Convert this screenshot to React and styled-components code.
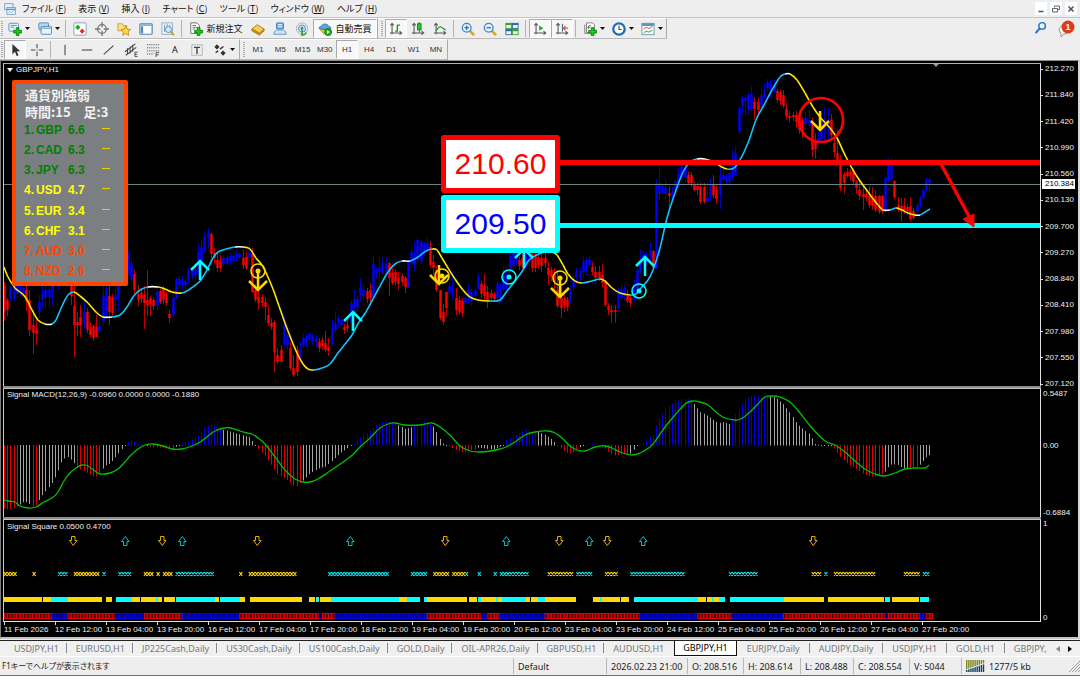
import React from 'react';
import styled, { createGlobalStyle, css } from 'styled-components';

const UI_FONT = '"Noto Sans", "Noto Sans CJK JP", sans-serif';
const CHART_FONT = '"Liberation Sans", sans-serif';

const GlobalStyle = createGlobalStyle`
  * {
    box-sizing: border-box;
  }

  body {
    margin: 0;
    background: #fff;
    font-family: ${UI_FONT};
    font-size: 9px;
    color: #111;
  }

  button {
    font: inherit;
    color: inherit;
    background: none;
    border: 0;
    padding: 0;
    margin: 0;
  }
`;

/* ---------- Window chrome ---------- */

const AppWindow = styled.div`
  display: flex;
  flex-direction: column;
  background: #eeeeee;
  border-bottom: 1px solid #4d7396;
  overflow: hidden;
`;

const MenuBar = styled.nav`
  display: flex;
  align-items: center;
  gap: 12px;
  height: 18px;
  padding: 0 3px 0 4px;
  border-bottom: 1px solid #c4c4c4;
`;

const MenuItem = styled.button`
  font-family: "Noto Sans CJK JP", sans-serif;
  font-feature-settings: "palt";
  font-size: 9px;
  line-height: 16px;
  white-space: nowrap;

  &:first-of-type {
    margin-left: -6px;
  }
`;

const WindowButtons = styled.div`
  display: flex;
  gap: 3px;
  margin-left: auto;

  button {
    width: 12px;
    height: 13px;
    background: #fff;
    display: flex;
    align-items: center;
    justify-content: center;
  }
`;

const ToolRow = styled.div`
  display: flex;
  align-items: stretch;
  height: 21px;
`;

const Strip = styled.div`
  display: flex;
  align-items: stretch;
  padding-left: 4px;
  border-top: 1px solid #fff;
  border-right: 1px solid #aaa;
  border-bottom: 1px solid #bbb;
  background: #eeeeee;
  position: relative;

  &::before {
    content: '';
    position: absolute;
    left: 1px;
    top: 2px;
    bottom: 2px;
    width: 2px;
    background: repeating-linear-gradient(#aaa 0 1px, #eee 1px 2px);
  }

  & + & {
    padding-left: 7px;
  }

  & + &::before {
    left: 3px;
  }
`;

const ToolButton = styled.button`
  display: flex;
  align-items: center;
  justify-content: center;
  gap: 3px;
  width: ${(p) => (p.$wide ? p.$wide : 22)}px;
  white-space: nowrap;
  border: 1px solid transparent;
  ${(p) =>
    p.$pressed &&
    css`
      background: #f8f8f8;
      border-color: #aaa #fff #fff #aaa;
    `}
`;

const OrderLabel = styled.span`
  font-family: "Noto Sans CJK JP", sans-serif;
  font-size: 9px;
  line-height: 16px;
`;

const Divider = styled.span`
  width: 1px;
  margin: 1px 3px 1px 2px;
  background: #b4b4b4;
`;

const Periods = styled.div`
  display: grid;
  grid-template-columns: repeat(9, 1fr);
  width: 200px;
  font-family: "Liberation Sans", sans-serif;
  font-size: 8px;
  color: #333;

  button {
    width: auto;
  }
`;

const TopRight = styled.div`
  display: flex;
  align-items: center;
  gap: 10px;
  margin-left: auto;
  padding-right: 5px;
`;

/* ---------- Chart ---------- */

const ChartWindow = styled.main`
  display: flex;
  flex-direction: column;
  background: #000;
  color: #f0f0f0;
  font-family: ${CHART_FONT};
  font-size: 8px;
  line-height: 10px;
  border-top: 1px solid #8c8c8c;
  border-left: 1px solid #7a7a7a;
  border-right: 2px solid #d8d8d8;
  border-bottom: 2px solid #c4c4c4;
  padding: 2px 0 0 2px;
`;

const Pane = styled.section`
  display: flex;
  height: ${(p) => p.$height}px;
`;

const Plot = styled.div`
  position: relative;
  flex: 1;
  min-width: 0;
  overflow: hidden;
  border-left: 1px solid #c8c8c8;
  border-right: 1px solid #e0e0e0;
  ${(p) => p.$top && 'border-top: 1px solid #b0b0b0;'}
  ${(p) => p.$bottom && 'border-bottom: 1px solid #e0e0e0;'}

  > svg {
    display: block;
    width: 100%;
    height: 100%;
  }
`;

const Splitter = styled.div`
  height: 3px;
  margin-right: 37px;
  background: #8e8e8e;
  border-bottom: 1px solid #c4c4c4;
`;

const Caption = styled.div`
  position: absolute;
  left: 3px;
  top: ${(p) => p.$top}px;
  display: flex;
  align-items: center;
  gap: 3px;
  white-space: nowrap;
`;

const Scale = styled.div`
  position: relative;
  display: flex;
  flex-direction: column;
  justify-content: space-between;
  width: 37px;
  padding-left: 2px;
  line-height: 8px;
`;

const PriceScale = styled(Scale)`
  padding: 2px 0 0;
  margin-bottom: -2px;
`;

// The zero line sits above the middle of this scale
const MacdScale = styled(Scale)`
  display: grid;
  grid-template-rows: 52px 1fr 8px;
  padding-top: 1px;
`;

const ScaleLabel = styled.span`
  display: flex;
  align-items: center;
  gap: 2px;

  &::before {
    content: '';
    width: 2px;
    height: 1px;
    background: #ddd;
  }
`;

const PriceTag = styled.span`
  position: absolute;
  left: 1px;
  top: 116px;
  width: 33px;
  padding-left: 3px;
  background: #fff;
  color: #000;
  line-height: 10px;
`;

const TimeAxis = styled.div`
  display: flex;
  height: 15px;
  overflow: hidden;
  padding-left: 1px;
  white-space: nowrap;

  span {
    flex: 0 0 51px;
    min-width: 0;
    padding-top: 3px;
    position: relative;
  }

  span::before {
    content: '';
    position: absolute;
    left: 0;
    top: 0;
    width: 1px;
    height: 3px;
    background: #ddd;
  }
`;

const StrengthPanel = styled.div`
  position: absolute;
  left: 8px;
  top: 16px;
  width: 116px;
  height: 206px;
  border: 4px solid #ff4500;
  border-radius: 2px;
  background: #7c7f82;
  padding: 2px 14px 0 8px;
  display: flex;
  flex-direction: column;
  font-family: "Noto Sans CJK JP", sans-serif;
  font-size: 13px;
  font-weight: 700;
  line-height: 17px;
  color: #f2f2f2;
`;

const StrengthHead = styled.div`
  display: flex;
  gap: 13px;
  padding-left: 1px;
`;

const StrengthList = styled.ul`
  list-style: none;
  margin: 0;
  padding: 0;
  flex: 1;
  display: grid;
  grid-template-rows: repeat(8, 1fr);
`;

const StrengthRow = styled.li`
  display: grid;
  grid-template-columns: 12px 32px 1fr 8px;
  align-items: center;
  font-family: "Liberation Sans", sans-serif;
  font-size: 12px;
  font-weight: 700;
  color: ${(p) => p.$color};

  i {
    height: 1px;
    margin-bottom: 4px;
    background: #e8d000;
  }
`;

const PriceBox = styled.div`
  position: absolute;
  left: 437px;
  top: ${(p) => p.$top}px;
  width: 119px;
  height: 58px;
  display: flex;
  align-items: center;
  justify-content: center;
  border: 5px solid ${(p) => p.$border};
  border-radius: 3px;
  background: #fff;
  color: ${(p) => p.$color};
  font-family: "Liberation Sans", sans-serif;
  font-size: 30px;
  line-height: 48px;
`;

/* ---------- Tabs and status ---------- */

const TabBar = styled.div`
  display: flex;
  align-items: stretch;
  height: 17px;
  margin-top: 1px;
  padding-left: 5px;
  border-top: 1px solid #222;
  border-bottom: 1px solid #fff;
  background: #f0f0f0;
`;

const TabList = styled.div`
  display: flex;
  flex: 1;
  min-width: 0;
  overflow: hidden;

  [aria-selected='true'] ~ button {
    padding-right: 10px;
  }
`;

const Tab = styled.button`
  position: relative;
  flex: none;
  padding: 0 8px 0 9px;
  color: #777;
  line-height: 14px;
  white-space: nowrap;

  &::after {
    content: '';
    position: absolute;
    right: 0;
    top: 2px;
    height: 10px;
    width: 1px;
    background: ${(p) => (p.$plain ? 'transparent' : '#888')};
  }

  ${(p) =>
    p.$active &&
    css`
      color: #000;
      background: #fff;
      border: 1px solid #111;
      border-top: 0;
      padding: 0 8px;
      margin: 0 1px 0 2px;
    `}
`;

const TabArrows = styled.div`
  display: flex;
  align-items: center;
  gap: 8px;
  padding: 0 8px 0 6px;
`;

const StatusBar = styled.footer`
  display: grid;
  grid-template-columns: 1fr 93px 81px 56px 57px 53px 56px 52px 119px;
  height: 18px;
  color: #222;
  line-height: 15px;
  white-space: nowrap;
`;

const StatusCell = styled.div`
  display: flex;
  align-items: center;
  gap: 4px;
  margin: 1px 0;
  padding-left: 4px;
  border-left: 1px solid #b8b8b8;

  &:last-child > svg:last-child {
    margin-left: auto;
  }
`;

const StatusHelp = styled.div`
  padding: 1px 2px;
  font-family: "Noto Sans", "Noto Sans CJK JP", sans-serif;
  font-feature-settings: "palt";
  font-size: 8px;
`;

/* ---------- Icons ---------- */

const Icon = ({ size = 14, children }) => (
  <svg width={size} height={size} viewBox="0 0 16 16" fill="none" aria-hidden="true">
    {children}
  </svg>
);

const Plus = ({ x = 6, y = 6 }) => (
  <path
    transform={`translate(${x} ${y})`}
    d="M3.500 0.500h3v3h3v3h-3v3h-3v-3h-3v-3h3z"
    fill="#1fc61f"
    stroke="#0b7d0b"
  />
);

const Caret = () => (
  <svg width="5" height="4" viewBox="0 0 5 4" aria-hidden="true">
    <path d="M0 0h5L2.500 3z" fill="#111" />
  </svg>
);

const Axes = () => (
  <path d="M3.500 14V2M1.500 4l2-2.500 2 2.500M1 12.500h12.500M12 10.500l2.500 2-2.500 2" stroke="#555" strokeWidth="1.200" />
);

const icons = {
  logo: (
    <>
      <rect x="1" y="1" width="11" height="8" fill="#e9f4ff" stroke="#4b90cc" />
      <rect x="4" y="6" width="11" height="9" fill="#fff" stroke="#4b90cc" />
      <path d="M4 8.500h11" stroke="#4b90cc" strokeWidth="2" />
      <path d="M6 13l2-2 2 2 3-3" stroke="#4b90cc" />
    </>
  ),
  newChart: (
    <>
      <rect x="1" y="1.500" width="11" height="9" rx="1" fill="#e4f1fb" stroke="#5a8fb8" />
      <path d="M3 4h7M3 6h4" stroke="#5a8fb8" />
      <Plus />
    </>
  ),
  profiles: (
    <>
      <rect x="1" y="1" width="11" height="8" rx="1" fill="#b9d9ef" stroke="#4b84b4" />
      <rect x="3.500" y="5" width="12" height="9" rx="1" fill="#e8f4fc" stroke="#4b84b4" />
      <path d="M4 7h11" stroke="#4b84b4" />
    </>
  ),
  market: (
    <>
      <rect x="1" y="1" width="14" height="14" rx="1" fill="#fff" stroke="#6d9fc6" />
      <path d="M5.500 3l3 3-3 3-3-3z" fill="#18a818" />
      <path d="M10.500 7.500l3 3-3 3-3-3z" fill="#e83020" />
    </>
  ),
  target: (
    <>
      <circle cx="8" cy="8" r="5" stroke="#777" strokeWidth="1.500" />
      <path d="M8 0v6M8 10v6M0 8h6M10 8h6" stroke="#777" strokeWidth="1.500" />
    </>
  ),
  navigator: (
    <>
      <path d="M1 2h5l1 2h4v6H1z" fill="#fbe08a" stroke="#c79a2a" />
      <path d="M10 4.500l1.700 3.600 3.800.5-2.800 2.700.7 3.900L10 13.300l-3.400 1.900.7-3.900-2.800-2.700 3.800-.5z" fill="#ffd84a" stroke="#b98a14" />
    </>
  ),
  terminal: (
    <>
      <rect x="1" y="2" width="14" height="12" rx="1" fill="#fff" stroke="#4f86b4" strokeWidth="1.400" />
      <path d="M1.500 3.500h13" stroke="#7db2dc" strokeWidth="2" />
      <path d="M3.500 5v8" stroke="#4f86b4" strokeWidth="2.400" />
    </>
  ),
  tester: (
    <>
      <rect x="1" y="1" width="12" height="13" fill="#eef5fa" stroke="#8aa9bf" />
      <path d="M4 3v8M7 2v4M10 3v4" stroke="#6d94b0" />
      <circle cx="8.500" cy="8.500" r="3.500" fill="#d3eafb" stroke="#4a86b8" />
      <path d="M11 11l4 4" stroke="#c99a2c" strokeWidth="2" />
    </>
  ),
  order: (
    <>
      <path d="M2 1h7l3 3v9H2z" fill="#fff" stroke="#666" />
      <path d="M4 4h4M4 6h6M4 8h3" stroke="#666" />
      <Plus />
    </>
  ),
  gold: (
    <>
      <path d="M1 8l6-5 8 5-5 5z" fill="#f4cf58" stroke="#a87412" />
      <path d="M1 8v2l8.500 5 5.500-5V8l-5.500 5z" fill="#d9992a" stroke="#a87412" />
    </>
  ),
  mail: (
    <>
      <rect x="4" y="1" width="8" height="7" rx="1" fill="#7ab7ea" stroke="#2d6fae" />
      <path d="M6 3h4M6 5.500h4" stroke="#fff" />
      <path d="M1 14c0-4 3-5 7-5s7 1 7 5z" fill="#cfe4f6" stroke="#5a90c0" />
    </>
  ),
  signals: (
    <>
      <circle cx="8" cy="7.500" r="6.500" fill="#dfe8ee" stroke="#a3b4c0" />
      <circle cx="8" cy="7.500" r="3.800" stroke="#6b98b8" strokeWidth="1.300" />
      <circle cx="8" cy="7" r="1.600" fill="#3b8bc2" />
      <path d="M8 8v7c2 0 4-1 5-3" stroke="#2ca02c" strokeWidth="1.800" />
    </>
  ),
  auto: (
    <>
      <path d="M2 8l4 5 7-1 1-4z" fill="#f2c84b" stroke="#b3841a" />
      <path d="M1 7c1-2 2-2 3-2 0-3 7-4 8 0 1 0 2 0 3 2-4 2-10 2-14 0z" fill="#5da6dc" stroke="#2f75ab" />
      <circle cx="11.500" cy="11.500" r="4" fill="#22b022" stroke="#0b750b" />
      <path d="M10.200 9.300v4.400l3.400-2.200z" fill="#fff" />
    </>
  ),
  bars: (
    <>
      <Axes />
      <path d="M9.500 3v8M9.500 3.500h3M7 10.500h2.500" stroke="#15941a" strokeWidth="1.500" />
    </>
  ),
  candles: (
    <>
      <Axes />
      <path d="M9.500 0v12" stroke="#0b7d0b" />
      <rect x="7.500" y="2" width="4" height="7" fill="#2fc52f" stroke="#0b7d0b" />
    </>
  ),
  line: (
    <>
      <Axes />
      <path d="M3.500 10c2-3 3-5 5-4.500s3 2 6 3.500" stroke="#15941a" strokeWidth="1.300" />
    </>
  ),
  zoomIn: (
    <>
      <path d="M10 10l5 5" stroke="#d6a52e" strokeWidth="3" />
      <circle cx="6.500" cy="6.500" r="5" fill="#e3f2fd" stroke="#3e86c2" strokeWidth="1.500" />
      <path d="M4 6.500h5M6.500 4v5" stroke="#2673b4" strokeWidth="1.500" />
    </>
  ),
  zoomOut: (
    <>
      <path d="M10 10l5 5" stroke="#d6a52e" strokeWidth="3" />
      <circle cx="6.500" cy="6.500" r="5" fill="#e3f2fd" stroke="#3e86c2" strokeWidth="1.500" />
      <path d="M4 6.500h5" stroke="#2673b4" strokeWidth="1.500" />
    </>
  ),
  tile: (
    <>
      <rect x="1" y="1.500" width="6.500" height="6" fill="#eafbe8" stroke="#3a9d2c" />
      <rect x="8.500" y="1.500" width="6.500" height="6" fill="#e8f2fc" stroke="#2e68a8" />
      <rect x="1" y="8.500" width="6.500" height="6" fill="#e8f2fc" stroke="#2e68a8" />
      <rect x="8.500" y="8.500" width="6.500" height="6" fill="#eafbe8" stroke="#3a9d2c" />
      <path d="M1 2.500h6.500M8.500 9.500H15" stroke="#3a9d2c" strokeWidth="2" />
      <path d="M8.500 2.500H15M1 9.500h6.500" stroke="#2e68a8" strokeWidth="2" />
    </>
  ),
  scroll: (
    <>
      <Axes />
      <path d="M7 4v6l5-3z" fill="#22b022" />
    </>
  ),
  shift: (
    <>
      <Axes />
      <path d="M8.500 2v9" stroke="#3c6f9f" strokeWidth="1.300" />
      <path d="M15 7h-5M12 4.500L9.500 7l2.500 2.500" stroke="#d2541c" strokeWidth="1.300" />
    </>
  ),
  indicators: (
    <>
      <path d="M4 1h7l2 2v9H4z" fill="#fff" stroke="#777" />
      <path d="M2 3v10h8" stroke="#777" />
      <path d="M6 8c0-4 1-4 3-4M5.500 6h3" stroke="#444" />
      <Plus />
    </>
  ),
  clock: (
    <>
      <circle cx="8" cy="8" r="6.500" fill="#fff" stroke="#1f6cb5" strokeWidth="2.600" />
      <path d="M8 4v4.500h3" stroke="#444" strokeWidth="1.200" />
    </>
  ),
  template: (
    <>
      <rect x="1" y="1.500" width="14" height="13" fill="#f4fafe" stroke="#6a95b5" />
      <path d="M1 3h14" stroke="#5b93c4" strokeWidth="3" />
      <path d="M3 8l3-2 3 1.500L13 5" stroke="#c9542c" />
      <path d="M3 12.500l3-2 3 1 4-2" stroke="#2a9a2a" />
    </>
  ),
  pointer: <path d="M5 1v12l3-3 2 5 2-1-2-4.500h4z" fill="#333" />,
  cross: <path d="M8 1v5M8 10v5M1 8h5M10 8h5M7.500 8h1" stroke="#444" strokeWidth="1.200" />,
  vline: <path d="M8 2v12" stroke="#444" strokeWidth="1.200" />,
  hline: <path d="M2 8h12" stroke="#444" strokeWidth="1.200" />,
  trend: <path d="M2 13L13 3" stroke="#444" strokeWidth="1.200" />,
  channel: (
    <>
      <path d="M1 10L13 1M2 14L14 5M4 6v7M7 4v8M10 2v8" stroke="#444" strokeWidth="1.200" />
      <path d="M15.500 10.500h-3v5h3M12.500 13h2.500" stroke="#444" />
    </>
  ),
  fibo: (
    <>
      <path d="M1 2h14M1 5.500h14M1 9h14M1 12.500h8" stroke="#555" strokeDasharray="1.500 1" />
      <path d="M15 11h-3.500v5M11.500 13.500h3" stroke="#444" />
    </>
  ),
  label: (
    <>
      <rect x="2" y="2" width="12" height="12" stroke="#777" strokeDasharray="1 1" />
      <path d="M4.500 5h7M8 5v7.500" stroke="#444" strokeWidth="1.600" />
    </>
  ),
  arrows: (
    <>
      <path d="M4.500 1.500l3 3-3 3-3-3zM11.500 8.500l3 3-3 3-3-3z" fill="#333" />
      <path d="M8 7l4-3M3 11l3-2" stroke="#333" strokeWidth="1.500" />
    </>
  ),
  search: (
    <>
      <path d="M7 9l-5 6" stroke="#2a6fc0" strokeWidth="2.400" />
      <circle cx="10" cy="6" r="4" fill="#eaf4fd" stroke="#2a6fc0" strokeWidth="1.800" />
    </>
  ),
};

const Drop = ({ name, label, wide }) => (
  <ToolButton $wide={wide} aria-label={label}>
    <Icon>{icons[name]}</Icon>
    <Caret />
  </ToolButton>
);

const Tool = ({ name, label, pressed }) => (
  <ToolButton $pressed={pressed} aria-label={label}>
    <Icon>{icons[name]}</Icon>
  </ToolButton>
);

/* ---------- Chart data ---------- */

const BAR = 3.18;
const R = '#ff0000';
const B = '#0000ff';
const GOLD = '#ffd800';
const CYAN = '#00ffff';

// x, high, body top, body bottom, low, direction
const CANDLES = `4 282 286 312 321 r,8 298 300 310 316 r,11 286 287 299 302 b,17 284 285 294 298 b,23 285 288 294 298 b,
26 286 290 302 311 r,29 290 300 330 336 r,33 310 325 333 354 r,36 318 330 334 345 r,39 295 302 312 318 b,42 285 294 300 307 b,
47 285 290 297 308 b,53 280 284 292 305 b,56 272 276 284 286 b,62 262 266 274 276 b,68 266 270 280 284 r,71 280 284 296 305 r,
74 286 306 325 357 r,78 312 322 325 336 r,81 305 317 325 337 r,84 298 312 324 330 b,87 308 312 330 333 r,90 322 327 335 337 r,
93 325 326 338 341 r,96 315 327 337 337 r,99 318 326 331 333 b,103 285 295 322 326 b,106 285 288 315 318 b,110 286 296 312 325 r,
115 284 295 300 318 b,118 280 286 296 311 b,122 262 268 280 284 b,126 255 260 272 276 b,129 250 255 272 276 b,131 258 263 280 282 b,
134 270 274 290 295 r,138 285 294 300 306 r,144 286 295 303 329 r,147 270 300 305 316 r,151 296 298 304 316 r,156 288 292 305 310 b,
161 289 291 302 304 r,166 292 294 303 306 r,169 310 314 318 323 r,172 292 298 315 317 b,175 278 279 298 300 b,180 275 279 285 290 b,
185 277 281 285 289 b,189 267 270 280 284 b,194 268 270 275 280 b,199 243 252 272 275 b,202 240 248 262 265 b,205 231 237 250 254 b,
208 228 233 238 248 b,211 233 234 254 258 r,214 248 253 258 263 r,218 253 260 268 272 r,221 255 262 268 272 r,225 255 257 264 266 b,
232 253 256 261 263 b,240 252 254 258 260 b,243 250 258 265 269 r,246 252 257 268 270 r,249 240 252 258 262 b,252 248 254 292 293 r,
255 284 290 300 302 r,259 289 297 303 310 r,265 297 302 307 320 r,267 305 315 323 326 r,271 318 323 327 330 r,274 320 322 352 372 r,
278 348 355 362 364 r,281 345 350 362 362 r,284 316 325 344 347 b,287 330 335 345 350 b,290 342 348 368 370 r,294 355 368 375 377 r,
297 346 350 372 376 r,300 342 350 360 362 b,304 333 338 345 348 b,309 332 334 340 344 b,316 335 338 342 348 b,320 338 342 348 352 r,
325 331 343 350 352 r,329 338 348 351 356 r,332 320 328 344 346 b,335 311 323 330 333 b,340 316 320 325 327 b,347 320 325 328 332 r,
352 300 303 322 334 b,355 290 299 308 313 b,359 278 288 295 302 b,363 284 290 296 300 b,369 283 290 298 306 r,373 255 264 297 298 b,
378 257 268 272 284 b,384 257 263 272 274 b,389 262 263 278 296 r,393 268 273 283 285 r,399 272 278 284 290 r,404 276 278 287 293 r,
408 260 262 287 288 b,414 242 253 265 271 b,420 241 242 262 264 b,427 237 243 250 252 b,431 241 247 265 268 r,434 255 262 268 275 r,
437 266 270 290 292 r,440 290 290 318 320 r,443 304 312 322 325 r,447 292 292 308 316 r,451 272 288 295 300 b,456 288 298 310 315 r,
460 296 300 312 315 r,464 296 298 303 304 b,469 283 290 300 303 b,474 287 290 295 300 b,478 273 276 288 290 b,483 274 286 296 300 r,
488 286 292 300 308 r,493 292 294 299 302 r,499 283 286 300 303 b,504 266 275 290 292 b,510 253 255 268 272 b,516 250 254 262 265 b,
522 248 258 264 272 r,528 250 256 262 270 b,534 245 254 268 272 r,540 253 258 266 272 r,546 250 258 263 268 r,549 262 268 275 285 r,
553 268 274 282 290 r,557 272 290 306 308 r,560 285 298 308 318 r,564 295 298 305 312 r,570 285 292 300 303 b,573 275 280 288 290 b,
578 268 271 278 282 b,584 256 261 272 278 b,588 255 260 265 268 b,593 262 267 272 275 r,597 266 272 278 281 r,601 264 275 283 287 r,
605 280 282 305 307 r,609 303 306 310 315 r,613 305 310 312 323 r,617 288 290 308 310 b,622 284 290 298 300 b,628 290 296 301 303 r,
634 280 290 300 302 b,637 262 270 290 300 b,641 250 260 272 274 b,645 252 254 262 266 b,649 243 250 256 262 b,653 250 251 268 270 r,
656 179 183 268 270 b,659 165 183 194 200 b,663 183 186 192 194 b,666 180 187 194 199 b,669 186 193 196 210 r,672 187 192 198 201 b,
676 178 181 190 192 b,679 168 173 183 188 b,682 157 165 178 180 b,686 165 168 178 182 b,689 172 175 183 185 r,694 182 184 190 191 r,
698 183 186 190 195 r,702 183 187 202 204 r,706 182 198 201 203 b,709 178 184 198 202 b,713 175 185 195 198 r,717 185 190 199 204 r,
721 165 175 195 209 b,724 163 175 180 185 b,728 162 173 182 186 b,731 150 165 178 180 b,734 147 153 175 177 b,737 130 132 153 156 b,
739 106 108 132 134 b,742 96 98 106 113 b,746 95 97 101 116 b,750 85 94 109 112 b,753 97 102 109 120 r,757 98 102 110 117 r,
761 87 95 105 108 b,764 84 90 97 99 b,769 79 84 90 97 b,774 80 84 92 93 b,778 89 91 100 103 r,782 90 95 106 108 r,786 103 109 116 120 r,
790 111 116 118 122 r,796 111 115 122 128 r,801 118 120 132 138 r,806 112 118 124 130 b,809 110 120 125 128 b,812 117 124 150 157 r,
815 133 142 149 159 r,819 132 138 142 145 b,822 110 120 140 143 b,826 108 122 130 142 b,830 114 120 135 140 r,834 136 143 152 158 r,
837 130 153 160 165 r,840 155 160 188 191 r,844 172 174 183 194 r,848 168 172 176 178 r,853 168 170 182 185 r,857 180 182 188 194 r,
861 180 190 196 200 r,864 187 194 197 210 r,868 186 196 205 208 r,872 187 198 206 210 r,876 190 196 210 212 r,880 195 196 212 214 r,
884 175 178 209 211 b,888 158 165 180 182 b,891 158 163 180 182 b,894 180 181 197 199 r,897 197 205 210 212 r,901 198 206 211 222 r,
905 198 206 210 214 r,910 197 206 219 221 r,914 208 211 218 220 r,917 203 205 212 213 b,920 196 198 206 207 b,923 188 190 198 200 b,
926 178 180 190 192 b,930 178 179 183 193 b`
  .split(',')
  .map((row) => {
    const [x, high, top, bottom, low, dir] = row.trim().split(' ');
    return { x: +x, high: +high, top: +top, bottom: +bottom, low: +low, dir };
  });

const points = (text) => text.trim().split(/\s+/).map((p) => p.split(',').map(Number));

const AVERAGE = points(`4,267 8,277 15,288 20,292 26,298 32,310 38,320 45,324 52,324 56,320 62,306 68,295 74,292 80,296 88,303 97,313
103,317 112,317 120,315 127,307 133,297 140,290 148,287 158,287 165,289 172,292 182,293 190,289 200,281 207,270 213,258 218,252
226,249 235,247 243,247 250,249 256,258 262,265 267,275 273,289 279,306 288,331 297,353 303,364 308,369 314,370 322,368 330,364
338,353 345,344 352,335 359,322 366,312 373,299 380,286 388,272 395,264 402,261 410,261 418,257 426,251 432,249 437,250 442,258
448,268 455,279 463,290 470,297 478,300 490,301 500,300 507,291 515,281 523,270 529,260 537,255 545,252 552,252 557,255 563,265
568,274 575,281 582,283 592,281 600,279 605,281 612,288 620,293 630,295 636,294 641,288 648,280 653,270 660,248 667,218 675,193
683,172 690,162 697,159 705,159 714,162 720,166 727,169 734,168 740,160 748,143 756,120 764,105 772,90 780,77 785,74 790,74
797,80 805,93 813,107 820,117 830,128 837,138 846,157 856,175 868,192 878,205 883,210 890,210 896,208 902,210 908,213 915,215
920,215 925,212 930,209`);

const MACD = points(`4,509 8,510 12,509 17,507 20,505 24,502 28,503 32,507 35,507 38,502 42,496 46,491 52,483 57,474 60,465 63,460
67,457 72,461 77,468 83,471 88,474 93,477 98,477 101,471 105,466 110,464 116,457 122,449 125,446 128,442 132,440 137,443 145,445
149,447 158,448 166,449 172,450 176,447 183,444 190,440 195,438 200,434 205,427 208,425 212,425 218,428 224,430 235,433 245,436
250,437 252,441 256,446 259,450 265,457 271,465 277,474 283,478 289,482 293,486 297,487 300,484 303,481 310,474 318,469 326,467
333,460 341,453 347,449 351,446 354,444 358,439 365,434 371,430 376,425 382,422 386,421 392,422 398,425 405,429 412,427 415,424
422,423 425,421 429,423 433,426 437,433 441,442 445,445 449,446 453,449 458,452 463,453 470,451 475,450 478,448 485,449 492,450
498,448 503,446 506,440 514,436 520,433 525,429 531,431 536,432 539,432 545,435 550,438 555,443 558,447 563,451 568,454 573,453
577,449 581,447 585,445 592,444 600,445 604,448 608,452 614,456 622,455 628,455 631,454 636,447 640,445 645,440 650,436 654,434
656,425 660,417 665,408 670,405 676,401 682,399 690,399 694,404 700,412 706,415 712,419 718,423 724,422 729,424 732,420 738,410
744,400 750,396 755,395 760,398 765,397 768,396 771,396 777,399 783,404 790,413 797,424 804,430 809,434 815,444 820,445 830,446
834,449 840,457 848,465 856,469 864,475 872,477 880,476 885,472 890,465 897,465 903,469 907,469 910,469 917,468 921,464 926,458
930,455`);

const SIGNAL = points(`4,500 8,501 15,502 20,506 28,508 36,507 44,502 52,498 58,492 64,481 70,473 76,468 82,465 88,466 95,471
100,474 110,473 118,469 124,463 130,456 138,449 145,445 153,444 163,446 172,449 182,449 192,446 200,442 208,436 215,431 224,428
231,428 240,431 247,433 252,434 258,438 265,444 275,457 285,470 295,479 303,482 310,482 318,479 330,471 350,457 360,447 370,438
380,428 388,424 395,423 405,425 420,425 432,423 440,427 450,435 460,446 470,451 480,452 490,451 500,449 506,447 515,442 525,435
535,432 548,431 555,433 562,438 570,446 577,450 585,451 595,447 605,446 612,448 620,452 632,455 640,453 650,447 656,440 665,427
675,415 685,404 692,401 700,402 708,405 716,412 725,418 735,420 741,419 750,412 758,404 765,397 773,396 780,397 790,402 800,413
812,428 825,441 835,445 845,452 855,461 865,469 875,474 884,476 895,473 905,469 915,468 925,468 929,465`);

// MACD bars are gray outside of these ranges
const MACD_RED = points('0,18 31,36 76,100 148,173 257,301 447,476 557,578 603,630 832,882 909,918');
const MACD_BLUE = points('127,146 182,222 353,397 414,431 505,537 584,601 639,692 731,769');

const X_GOLD = points('4,17 31,34 72,100 142,154 157,160 164,173 240,243 249,297 434,449 453,464 546,573 603,618 810,822 832,876 902,918');
const X_CYAN = points('56,68 101,106 119,131 174,214 329,389 412,427 466,469 476,481 494,497 501,529 575,592 631,685 730,758 825,828 886,889 921,930');
const BAR_GOLD = points(`4,42 43,51 68,102 106,112 132,140 141,156 158,162 164,175 215,219 240,245 250,302 309,315 320,331 399,407
427,467 469,477 481,496 498,502 526,530 531,538 545,576 593,600 602,620 621,629 698,706 707,712 714,719 784,824 828,884 892,919`);
const BAR_CYAN = points(`51,68 116,132 156,158 176,215 220,240 316,319 331,399 407,420 424,427 478,481 496,498 502,526 538,545 600,602
634,698 712,714 719,725 730,784 885,890 920,929`);
const BOX_BLUE = points('50,66 116,142 155,156 181,238 318,320 333,426 480,486 498,544 638,696 731,782 884,888 920,925');

const inside = (ranges, x) => ranges.some(([from, to]) => x >= from && x <= to);

const yAt = (list, x) => {
  const i = Math.max(1, list.findIndex(([px]) => px >= x));
  const [x0, y0] = list[i - 1];
  const [x1, y1] = list[i];
  return y0 + ((y1 - y0) * (x - x0)) / (x1 - x0);
};

// Catmull-Rom spline through the given points, one cubic per span
const spans = (list) =>
  list.slice(1).map((p2, i) => {
    const p1 = list[i];
    const p0 = list[i - 1] || p1;
    const p3 = list[i + 2] || p2;
    const c1 = [p1[0] + (p2[0] - p0[0]) / 6, p1[1] + (p2[1] - p0[1]) / 6];
    const c2 = [p2[0] - (p3[0] - p1[0]) / 6, p2[1] - (p3[1] - p1[1]) / 6];
    return { from: p1, to: p2, curve: `C${c1} ${c2} ${p2}` };
  });

const averageColor = ({ from, to }) => {
  const slope = (to[1] - from[1]) / (to[0] - from[0]);
  if (Math.abs(slope) < 0.08) return '#ffffff';
  return slope > 0 ? '#ffe600' : '#10c4ff';
};

const barXs = Array.from({ length: 292 }, (_, i) => 4 + i * BAR);

// Fill the bars that stand between two listed candles
const candles = barXs.map((x, i) => {
  const near = CANDLES.reduce((a, b) => (Math.abs(b.x - x) < Math.abs(a.x - x) ? b : a));
  if (Math.abs(near.x - x) <= 1.7) return { ...near, x };
  const off = ((i * 7) % 5) - 2;
  return { ...near, x, high: near.top - 3 + off, top: near.top + off, bottom: near.bottom + off, low: near.bottom + 4 + off };
});

const PRICES = ['212.270', '211.840', '211.420', '210.990', '210.560', '210.130', '209.700', '209.270', '208.840', '208.410', '207.980', '207.550', '207.120'];

const TIMES = ['11 Feb 2026', '12 Feb 12:00', '13 Feb 04:00', '13 Feb 20:00', '16 Feb 12:00', '17 Feb 04:00', '17 Feb 20:00', '18 Feb 12:00', '19 Feb 04:00', '19 Feb 20:00', '20 Feb 12:00', '23 Feb 04:00', '23 Feb 20:00', '24 Feb 12:00', '25 Feb 04:00', '25 Feb 20:00', '26 Feb 12:00', '27 Feb 04:00', '27 Feb 20:00'];

const STRENGTH = [
  ['GBP', '6.6', '#008000'],
  ['CAD', '6.3', '#008000'],
  ['JPY', '6.3', '#008000'],
  ['USD', '4.7', '#ffff00'],
  ['EUR', '3.4', '#ffff00'],
  ['CHF', '3.1', '#ffff00'],
  ['AUD', '3.0', '#ff4500'],
  ['NZD', '2.6', '#ff4500'],
];

const MENUS = [['ファイル', 'F'], ['表示', 'V'], ['挿入', 'I'], ['チャート', 'C'], ['ツール', 'T'], ['ウィンドウ', 'W'], ['ヘルプ', 'H']];
const PERIODS = ['M1', 'M5', 'M15', 'M30', 'H1', 'H4', 'D1', 'W1', 'MN'];
const TABS = ['USDJPY,H1', 'EURUSD,H1', 'JP225Cash,Daily', 'US30Cash,Daily', 'US100Cash,Daily', 'GOLD,Daily', 'OIL-APR26,Daily', 'GBPUSD,H1', 'AUDUSD,H1', 'GBPJPY,H1', 'EURJPY,Daily', 'AUDJPY,Daily', 'USDJPY,H1', 'GOLD,H1', 'GBPJPY,'];
const ACTIVE_TAB = 9;
const STATUS = ['Default', '2026.02.23 21:00', 'O: 208.516', 'H: 208.614', 'L: 208.488', 'C: 208.554', 'V: 5044'];

/* ---------- Chart drawings ---------- */

const UpArrow = ({ x, y }) => (
  <path d={`M${x} ${y + 20}V${y + 1}M${x - 9} ${y + 10}L${x} ${y + 1}L${x + 9} ${y + 10}`} fill="none" stroke={CYAN} strokeWidth="2.500" />
);

const DownArrow = ({ x, y }) => (
  <path d={`M${x} ${y - 20}V${y - 1}M${x - 9} ${y - 10}L${x} ${y - 1}L${x + 9} ${y - 10}`} fill="none" stroke={GOLD} strokeWidth="2.500" />
);

const Ring = ({ x, y, color }) => (
  <g>
    <circle cx={x} cy={y} r="7" fill="none" stroke={color} strokeWidth="1.600" />
    <circle cx={x} cy={y} r="2.500" fill={color} />
  </g>
);

function PriceDrawing() {
  return (
    <svg aria-label="GBPJPY H1">
      <g transform="translate(-4 -64)">
        {candles.map((c) => (
          <g key={c.x} fill={c.dir === 'r' ? R : B}>
            <rect x={Math.round(c.x)} y={c.high} width="1" height={c.low - c.high} opacity="0.75" />
            <rect x={Math.round(c.x) - 0.7} y={c.top} width="2.400" height={c.bottom - c.top} />
          </g>
        ))}
        <path d="M4 184.500h3000" stroke="#6b8386" />
        {spans(AVERAGE).map((s) => (
          <path key={s.from[0]} d={`M${s.from}${s.curve}`} fill="none" stroke={averageColor(s)} strokeWidth="1.600" />
        ))}
        <UpArrow x={200} y={260} />
        <UpArrow x={353} y={311} />
        <UpArrow x={524} y={248} />
        <UpArrow x={645} y={256} />
        <DownArrow x={258} y={291} />
        <DownArrow x={439} y={285} />
        <DownArrow x={560} y={298} />
        <DownArrow x={820} y={131} />
        <Ring x={258} y={271} color={GOLD} />
        <Ring x={442} y={276} color={GOLD} />
        <Ring x={560} y={278} color={GOLD} />
        <Ring x={509} y={277} color={CYAN} />
        <Ring x={639} y={291} color={CYAN} />
        <circle cx="821" cy="120" r="22" fill="none" stroke="#ff0000" strokeWidth="2.600" />
        <path d="M556 162.500h3000" stroke="#ff0000" strokeWidth="5" />
        <path d="M556 225.500h3000" stroke="#00ffff" strokeWidth="5" />
        <path d="M941 164L972 222" stroke="#ff0000" strokeWidth="3.500" />
        <path d="M974 227L963 219L974 214z" fill="#ff0000" stroke="#ff0000" />
        <path d="M932 63h8l-4 4z" fill="#8a97a5" />
      </g>
    </svg>
  );
}

function MacdDrawing() {
  return (
    <svg aria-label="MACD">
      <g transform="translate(-4 -389)">
        {barXs.map((x) => {
          const y = yAt(MACD, Math.min(x, 929));
          const color = inside(MACD_RED, x) ? '#e00000' : inside(MACD_BLUE, x) ? '#0000e0' : '#a4a4a4';
          return (
            <rect
              key={x}
              x={Math.round(x)}
              y={Math.min(y, 445)}
              width="1"
              height={Math.max(1, Math.abs(y - 445.5))}
              fill={color}
            />
          );
        })}
        <path
          d={`M${SIGNAL[0]}${spans(SIGNAL).map((s) => s.curve).join('')}`}
          fill="none"
          stroke="#00c000"
          strokeWidth="1.300"
        />
      </g>
    </svg>
  );
}

const CROSS = 'm-1.500 -2l3 4m0 -4l-3 4';

function SquareDrawing() {
  const xs = (ranges) => barXs.filter((x) => inside(ranges, x + 1)).map((x) => `M${x + 1.5} 574${CROSS}`).join('');
  return (
    <svg aria-label="Signal Square">
      <g transform="translate(-4 -520)">
        {[73, 162, 257, 445, 559, 607, 813].map((x) => (
          <path key={x} d={`M${x - 1.5} 536.500h3.500v4h2l-3.700 5-3.800-5h2z`} fill="none" stroke="#e0b000" />
        ))}
        {[125, 182, 350, 506, 589, 643].map((x) => (
          <path key={x} d={`M${x - 1.5} 545.500h3.500v-4h2l-3.700-5-3.800 5h2z`} fill="none" stroke="#00c0c8" />
        ))}
        <path d={xs(X_GOLD)} stroke="#ffd000" strokeWidth="1.200" fill="none" />
        <path d={xs(X_CYAN)} stroke="#00e8f0" strokeWidth="1.200" fill="none" />
        {BAR_GOLD.map(([a, b]) => (
          <rect key={a} x={a} y="597" width={b - a} height="5" fill={GOLD} />
        ))}
        {BAR_CYAN.map(([a, b]) => (
          <rect key={a} x={a} y="597" width={b - a} height="5" fill={CYAN} />
        ))}
        {barXs.map((x) => (
          <rect
            key={x}
            x={x + 0.5}
            y="613.500"
            width="2.700"
            height="5"
            fill={inside(BOX_BLUE, x + 1) ? '#000070' : '#500000'}
            stroke={inside(BOX_BLUE, x + 1) ? '#0000e8' : '#e80000'}
          />
        ))}
      </g>
    </svg>
  );
}

function App() {
  return (
    <>
      <GlobalStyle />
      <AppWindow>
        <MenuBar>
          <Icon size={12}>{icons.logo}</Icon>
          {MENUS.map(([name, key]) => (
            <MenuItem key={key}>
              {name} (<u>{key}</u>)
            </MenuItem>
          ))}
          <WindowButtons>
            <button aria-label="Minimize">
              <Icon size={8}>
                <path d="M3 13h10" stroke="#456" strokeWidth="3" />
              </Icon>
            </button>
            <button aria-label="Restore">
              <Icon size={8}>
                <path d="M5 5V2h10v7h-4M1 7h10v7H1z" stroke="#567" strokeWidth="2" />
              </Icon>
            </button>
            <button aria-label="Close">
              <Icon size={8}>
                <path d="M3 3l10 10M13 3L3 13" stroke="#456" strokeWidth="3" />
              </Icon>
            </button>
          </WindowButtons>
        </MenuBar>

        <ToolRow>
          <Strip>
            <Drop name="newChart" label="New chart" wide={30} />
            <Drop name="profiles" label="Profiles" wide={29} />
            <Divider />
            <Tool name="market" label="Market watch" />
            <Tool name="target" label="Data window" />
            <Tool name="navigator" label="Navigator" />
            <Tool name="terminal" label="Terminal" />
            <Tool name="tester" label="Strategy tester" />
            <Divider />
            <ToolButton $wide={62}>
              <Icon>{icons.order}</Icon>
              <OrderLabel>新規注文</OrderLabel>
            </ToolButton>
            <Tool name="gold" label="MetaEditor" />
            <Tool name="mail" label="Market" />
            <Tool name="signals" label="Signals" />
            <ToolButton $wide={64} $pressed>
              <Icon>{icons.auto}</Icon>
              <OrderLabel>自動売買</OrderLabel>
            </ToolButton>
          </Strip>
          <Strip>
            <Tool name="bars" label="Bar chart" pressed />
            <Tool name="candles" label="Candlesticks" />
            <Tool name="line" label="Line chart" />
            <Divider />
            <Tool name="zoomIn" label="Zoom in" />
            <Tool name="zoomOut" label="Zoom out" />
            <Tool name="tile" label="Tile windows" />
            <Divider />
            <Tool name="scroll" label="Auto scroll" pressed />
            <Tool name="shift" label="Chart shift" pressed />
            <Divider />
            <Drop name="indicators" label="Indicators" wide={29} />
            <Drop name="clock" label="Periods" wide={29} />
            <Drop name="template" label="Templates" wide={29} />
          </Strip>
          <TopRight>
            <button aria-label="Search">
              <Icon size={13}>{icons.search}</Icon>
            </button>
            <svg width="18" height="18" viewBox="0 0 18 18" aria-label="1">
              <path d="M2 10a5 4 0 1 1 5 4l-3 3v-3z" fill="#f4f4f4" stroke="#999" />
              <circle cx="11" cy="7" r="6.500" fill="#dd3a1c" />
              <text x="11" y="10" textAnchor="middle" fontFamily="Liberation Sans" fontSize="9" fontWeight="700" fill="#fff">
                1
              </text>
            </svg>
          </TopRight>
        </ToolRow>

        <ToolRow>
          <Strip>
            <Tool name="pointer" label="Cursor" pressed />
            <Tool name="cross" label="Crosshair" />
            <Divider />
            <Tool name="vline" label="Vertical line" />
            <Tool name="hline" label="Horizontal line" />
            <Tool name="trend" label="Trendline" />
            <Tool name="channel" label="Equidistant channel" />
            <Tool name="fibo" label="Fibonacci retracement" />
            <ToolButton>A</ToolButton>
            <Tool name="label" label="Text label" />
            <Drop name="arrows" label="Arrows" wide={31} />
          </Strip>
          <Strip>
            <Periods>
              {PERIODS.map((p) => (
                <ToolButton key={p} $pressed={p === 'H1'}>
                  {p}
                </ToolButton>
              ))}
            </Periods>
          </Strip>
        </ToolRow>

        <ChartWindow>
          <Pane $height={323}>
            <Plot $top>
              <PriceDrawing />
              <Caption $top={1}>
                <svg width="6" height="4" viewBox="0 0 6 4" aria-hidden="true">
                  <path d="M0 0h6L3 4z" fill="#fff" />
                </svg>
                GBPJPY,H1
              </Caption>
              <StrengthPanel>
                <StrengthHead>通貨別強弱</StrengthHead>
                <StrengthHead>
                  <span>時間:15</span>
                  <span>足:3</span>
                </StrengthHead>
                <StrengthList>
                  {STRENGTH.map(([code, value, color], i) => (
                    <StrengthRow key={code} $color={color}>
                      <span>{i + 1}.</span>
                      <span>{code}</span>
                      <span>{value}</span>
                      <i />
                    </StrengthRow>
                  ))}
                </StrengthList>
              </StrengthPanel>
              <PriceBox $top={71} $border="#ff0000" $color="#ff0000">
                210.60
              </PriceBox>
              <PriceBox $top={131} $border="#00ffff" $color="#0000ff">
                209.50
              </PriceBox>
            </Plot>
            <PriceScale>
              {PRICES.map((p) => (
                <ScaleLabel key={p}>{p}</ScaleLabel>
              ))}
              <PriceTag>210.384</PriceTag>
            </PriceScale>
          </Pane>
          <Splitter />
          <Pane $height={128}>
            <Plot>
              <MacdDrawing />
              <Caption $top={1}>Signal MACD(12,26,9) -0.0960 0.0000 0.0000 -0.1880</Caption>
            </Plot>
            <MacdScale>
              <span>0.5487</span>
              <span>0.00</span>
              <span>-0.6884</span>
            </MacdScale>
          </Pane>
          <Splitter />
          <Pane $height={102}>
            <Plot $bottom>
              <SquareDrawing />
              <Caption $top={2}>Signal Square 0.0500 0.4700</Caption>
            </Plot>
            <Scale>
              <span>1</span>
              <span>0</span>
            </Scale>
          </Pane>
          <TimeAxis>
            {TIMES.map((t) => (
              <span key={t}>{t}</span>
            ))}
          </TimeAxis>
        </ChartWindow>

        <TabBar>
          <TabList role="tablist">
            {TABS.map((t, i) => (
              <Tab
                key={i}
                role="tab"
                aria-selected={i === ACTIVE_TAB}
                $active={i === ACTIVE_TAB}
                $plain={i === ACTIVE_TAB || i === ACTIVE_TAB - 1 || i === TABS.length - 1}
              >
                {t}
              </Tab>
            ))}
          </TabList>
          <TabArrows>
            <button aria-label="Previous tabs">
              <svg width="4" height="6" viewBox="0 0 4 6">
                <path d="M4 0v6L0 3z" fill="#888" />
              </svg>
            </button>
            <button aria-label="Next tabs">
              <svg width="4" height="6" viewBox="0 0 4 6">
                <path d="M0 0v6l4-3z" fill="#000" />
              </svg>
            </button>
          </TabArrows>
        </TabBar>

        <StatusBar>
          <StatusHelp>F1キーでヘルプが表示されます</StatusHelp>
          {STATUS.map((s) => (
            <StatusCell key={s}>{s}</StatusCell>
          ))}
          <StatusCell>
            <svg width="19" height="12" viewBox="0 0 19 12" aria-hidden="true">
              {Array.from({ length: 9 }, (_, i) => (
                <g key={i}>
                  <rect x={i * 2.1} y="0" width="1.400" height={9 - i * 0.7} fill="#7d8420" />
                  <rect x={i * 2.1} y={10 - i * 0.7} width="1.400" height={2 + i * 0.7} fill="#143f66" />
                </g>
              ))}
            </svg>
            1277/5 kb
            <svg width="12" height="12" viewBox="0 0 12 12" aria-hidden="true">
              <path d="M1 12L12 1M4 12l8-8M7 12l5-5M10 12l2-2" stroke="#999" />
            </svg>
          </StatusCell>
        </StatusBar>
      </AppWindow>
    </>
  );
}

export default App;
